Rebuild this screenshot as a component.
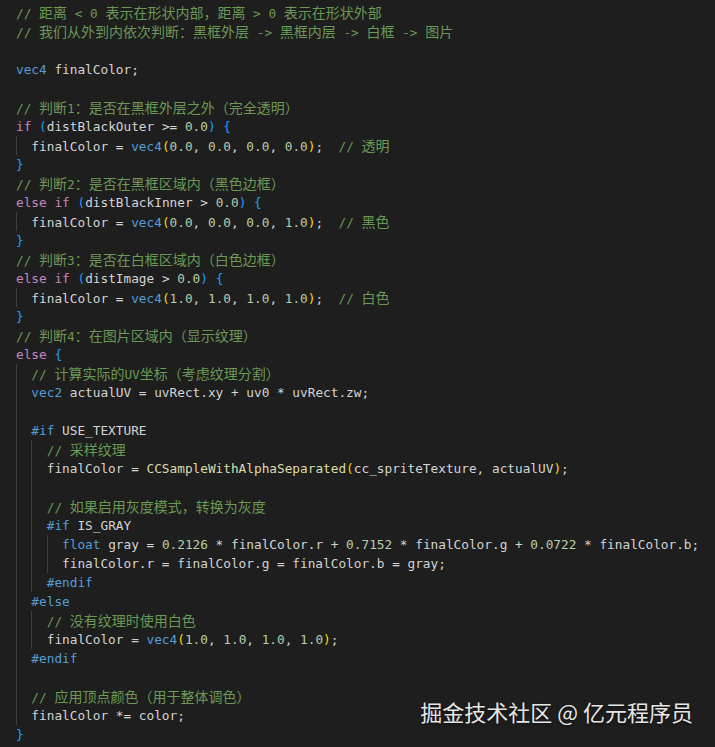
import React from 'react';

// token colours, VS Code dark+ style
const colors = {
  c: 'text-[#6A9955]',
  k: 'text-[#C586C0]',
  t: 'text-[#569CD6]',
  n: 'text-[#B5CEA8]',
  f: 'text-[#DCDCAA]',
  p: 'text-[#D4D4D4]',
  b: 'text-[#179FFF]',
  y: 'text-[#FFD700]',
};

const guideLeft = ['left-[16px]', 'left-[31px]', 'left-[47px]'];

const vec4 = (a, b, c, d) => [
  ['t', 'vec4'], ['y', '('],
  ['n', a], ['p', ', '], ['n', b], ['p', ', '], ['n', c], ['p', ', '], ['n', d],
  ['y', ')'],
];

const lines = [
  { t: [['c', '// 距离 < 0 表示在形状内部，距离 > 0 表示在形状外部']] },
  { t: [['c', '// 我们从外到内依次判断：黑框外层 -> 黑框内层 -> 白框 -> 图片']] },
  { g: 0 },
  { t: [['t', 'vec4'], ['p', ' finalColor;']] },
  { g: 0 },
  { t: [['c', '// 判断1：是否在黑框外层之外（完全透明）']] },
  { t: [['k', 'if'], ['p', ' '], ['b', '('], ['p', 'distBlackOuter >= '], ['n', '0.0'], ['b', ')'], ['p', ' '], ['b', '{']] },
  { t: [['p', '  finalColor = '], ...vec4('0.0', '0.0', '0.0', '0.0'), ['p', ';  '], ['c', '// 透明']] },
  { t: [['b', '}']] },
  { t: [['c', '// 判断2：是否在黑框区域内（黑色边框）']] },
  { t: [['k', 'else'], ['p', ' '], ['k', 'if'], ['p', ' '], ['b', '('], ['p', 'distBlackInner > '], ['n', '0.0'], ['b', ')'], ['p', ' '], ['b', '{']] },
  { t: [['p', '  finalColor = '], ...vec4('0.0', '0.0', '0.0', '1.0'), ['p', ';  '], ['c', '// 黑色']] },
  { t: [['b', '}']] },
  { t: [['c', '// 判断3：是否在白框区域内（白色边框）']] },
  { t: [['k', 'else'], ['p', ' '], ['k', 'if'], ['p', ' '], ['b', '('], ['p', 'distImage > '], ['n', '0.0'], ['b', ')'], ['p', ' '], ['b', '{']] },
  { t: [['p', '  finalColor = '], ...vec4('1.0', '1.0', '1.0', '1.0'), ['p', ';  '], ['c', '// 白色']] },
  { t: [['b', '}']] },
  { t: [['c', '// 判断4：在图片区域内（显示纹理）']] },
  { t: [['k', 'else'], ['p', ' '], ['b', '{']] },
  { t: [['p', '  '], ['c', '// 计算实际的UV坐标（考虑纹理分割）']] },
  { t: [['p', '  '], ['t', 'vec2'], ['p', ' actualUV = uvRect.xy + uv0 * uvRect.zw;']] },
  { g: 1 },
  { t: [['p', '  '], ['t', '#if'], ['p', ' USE_TEXTURE']] },
  { t: [['p', '    '], ['c', '// 采样纹理']] },
  { t: [['p', '    finalColor = '], ['f', 'CCSampleWithAlphaSeparated'], ['y', '('], ['p', 'cc_spriteTexture, actualUV'], ['y', ')'], ['p', ';']] },
  { g: 2 },
  { t: [['p', '    '], ['c', '// 如果启用灰度模式，转换为灰度']] },
  { t: [['p', '    '], ['t', '#if'], ['p', ' IS_GRAY']] },
  { t: [['p', '      '], ['t', 'float'], ['p', ' gray = '], ['n', '0.2126'], ['p', ' * finalColor.r + '], ['n', '0.7152'], ['p', ' * finalColor.g + '], ['n', '0.0722'], ['p', ' * finalColor.b;']] },
  { t: [['p', '      finalColor.r = finalColor.g = finalColor.b = gray;']] },
  { t: [['p', '    '], ['t', '#endif']] },
  { t: [['p', '  '], ['t', '#else']] },
  { t: [['p', '    '], ['c', '// 没有纹理时使用白色']] },
  { t: [['p', '    finalColor = '], ...vec4('1.0', '1.0', '1.0', '1.0'), ['p', ';']] },
  { t: [['p', '  '], ['t', '#endif']] },
  { g: 1 },
  { t: [['p', '  '], ['c', '// 应用顶点颜色（用于整体调色）']] },
  { t: [['p', '  finalColor *= color;']] },
  { t: [['b', '}']] },
];

const CJK = /([\u3000-\u303f\u4e00-\u9fff\uff00-\uffef]+)/;

const Token = ({ type, text }) => (
  <span className={colors[type]}>
    {text.split(CJK).map((s, i) =>
      i % 2 ? (
        <span key={i} className="text-[14px] font-['Noto_Sans_CJK_SC',sans-serif]">{s}</span>
      ) : (
        s
      )
    )}
  </span>
);

const guideCount = (line) => {
  if (line.g !== undefined) return line.g;
  const first = line.t[0][1];
  const indent = first.length - first.trimStart().length;
  return Math.floor(indent / 2);
};

const App = () => {
  return (
    <div className="relative w-[715px] h-[747px] overflow-hidden bg-[#1e1e1e] pt-[3px] pl-[16px] font-['DejaVu_Sans_Mono','Noto_Sans_CJK_SC',monospace] text-[12.76px] text-[#D4D4D4]">
      {lines.map((line, i) => (
        <div key={i} className="h-[19px] leading-[19px] whitespace-pre">
          {/* indent guides */}
          {guideLeft.slice(0, guideCount(line)).map((cls) => (
            <span key={cls} className={`absolute w-px h-[19px] bg-[#404040] ${cls}`} />
          ))}
          {line.t && line.t.map(([type, text], j) => <Token key={j} type={type} text={text} />)}
        </div>
      ))}

      {/* watermark */}
      <div className="absolute right-[22px] bottom-[21px] leading-[30px] text-[22px] text-[#e6e6e6] font-['Noto_Sans_CJK_SC',sans-serif] [text-shadow:0_1px_3px_rgba(0,0,0,0.6)]">
        掘金技术社区 @ 亿元程序员
      </div>
    </div>
  );
};

export default App;
